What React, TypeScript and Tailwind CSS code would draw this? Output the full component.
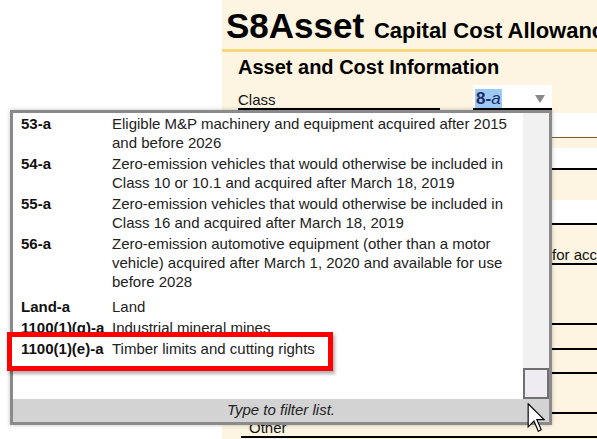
import React from "react";

type CcaClass = { code: string; desc: string; extra?: boolean; picked?: boolean };

const classList: CcaClass[] = [
  { code: "53-a", desc: "Eligible M&P machinery and equipment acquired after 2015 and before 2026" },
  { code: "54-a", desc: "Zero-emission vehicles that would otherwise be included in Class 10 or 10.1 and acquired after March 18, 2019" },
  { code: "55-a", desc: "Zero-emission vehicles that would otherwise be included in Class 16 and acquired after March 18, 2019" },
  {
    code: "56-a",
    desc: "Zero-emission automotive equipment (other than a motor vehicle) acquired after March 1, 2020 and available for use before 2028",
    extra: true,
  },
  { code: "Land-a", desc: "Land" },
  { code: "1100(1)(g)-a", desc: "Industrial mineral mines" },
  { code: "1100(1)(e)-a", desc: "Timber limits and cutting rights", picked: true },
];

const FormPanel = () => {
  return (
    <div className="flex-1 min-w-0 bg-[#fdf4e1] overflow-hidden whitespace-nowrap">
      {/* title */}
      <div className="pt-[8px] pb-[6px] pl-[4px] border-b-[3px] border-[#f9d67c]">
        <h1 className="text-[35px] leading-[35px] font-bold text-black">
          S8Asset <span className="text-[22px] leading-[22px]">Capital Cost Allowance</span>
        </h1>
      </div>

      <h2 className="mt-[4px] pl-[16px] text-[20px] leading-[22px] font-bold text-black">
        Asset and Cost Information
      </h2>

      {/* class field */}
      <div className="mt-[7px] flex pl-[16px]">
        <div className="w-[202px] h-[25px] border-b-2 border-black flex items-end text-[15px] leading-[17px]">
          Class
        </div>
        <div className="ml-[33px] w-[79px] h-[25px] bg-white border-b-2 border-black flex items-end justify-between pl-[2px] pr-[7px]">
          <span className="bg-[#9ec9f6] text-[#1d2d63] text-[17px] leading-[19px] px-[1px]">
            <span className="font-bold">8-</span>
            <span className="italic">a</span>
          </span>
          <svg width="10" height="8" viewBox="0 0 10 8" className="mb-[5px]">
            <polygon points="0,0 10,0 5,8" fill="#8a8a8a" />
          </svg>
        </div>
      </div>

      {/* rest of the form, mostly hidden behind the list */}
      <div className="h-[3px]" />
      <div className="h-[25px] bg-white border-b border-[#7a5a30]" />
      <div className="h-[10px]" />
      <div className="h-[22px] bg-white border-b-2 border-black" />
      <div className="h-[30px]" />
      <div className="h-[25px] bg-white border-b-2 border-black" />
      <div className="h-[22px]" />
      <div className="h-[18px] border-b-2 border-black flex items-end text-[15px] leading-[16px]">
        <span className="ml-[330px]">for accelerated investment incentive</span>
      </div>
      <div className="h-[60px] border-b-2 border-black" />
      <div className="h-[25px] border-b-2 border-black" />
      <div className="h-[24px] border-b-2 border-black" />
      <div className="h-[40px] border-b-2 border-black" />
      <div className="ml-[19px] h-[24px] border-b-2 border-black flex items-end text-[15px] leading-[16px] pl-[8px]">
        Other
      </div>
    </div>
  );
};

const ClassDropdown = () => {
  return (
    <div className="absolute left-[10px] top-[110px] w-[542px] h-[315px] border-[3px] border-[#8a8a8a] bg-white flex flex-col shadow-[0_0_4px_rgba(0,0,0,0.25)]">
      <div className="flex flex-1 min-h-0">
        <div className="flex-1 text-[15px] leading-[19px]">
          {classList.map((c) => (
            <div key={c.code} className={`relative flex py-[1px] pl-[8px] pr-[8px] ${c.extra ? "pb-[5px]" : ""}`}>
              {c.picked && (
                <div className="absolute -left-[6px] -top-[6px] w-[326px] h-[39px] border-[5px] border-[#ff0000] bg-white shadow-[2px_3px_3px_rgba(0,0,0,0.3)]" />
              )}
              <span className="relative w-[91px] shrink-0 font-bold text-[#111]">{c.code}</span>
              <span className="relative flex-1 text-[#222]">{c.desc}</span>
            </div>
          ))}
        </div>
        {/* scrollbar */}
        <div className="w-[26px] bg-[#f1f1f1] flex flex-col justify-end">
          <div className="h-[31px] border-2 border-[#707070] bg-[#efebf2]" />
        </div>
      </div>
      <div className="h-[23px] bg-[#d3d3d3] flex items-center justify-center italic text-[15px] text-[#222]">
        Type to filter list.
      </div>
    </div>
  );
};

const Cursor = () => (
  <svg className="absolute left-[527px] top-[403px]" width="19" height="29" viewBox="0 0 12.5 20">
    <path
      d="M0.5 0.5 L0.5 16.5 L4.5 12.5 L7.5 19.5 L9.5 18.5 L6.5 11.5 L11.5 11.5 Z"
      fill="#fff"
      stroke="#000"
      strokeWidth="0.8"
      strokeLinejoin="miter"
    />
  </svg>
);

export default function App() {
  return (
    <div className="relative w-[597px] h-[439px] overflow-hidden bg-white font-['Liberation_Sans',Arial,sans-serif] text-[#111]">
      <div className="flex h-full">
        <div className="w-[222px] shrink-0" />
        <FormPanel />
      </div>
      <ClassDropdown />
      <Cursor />
    </div>
  );
}
